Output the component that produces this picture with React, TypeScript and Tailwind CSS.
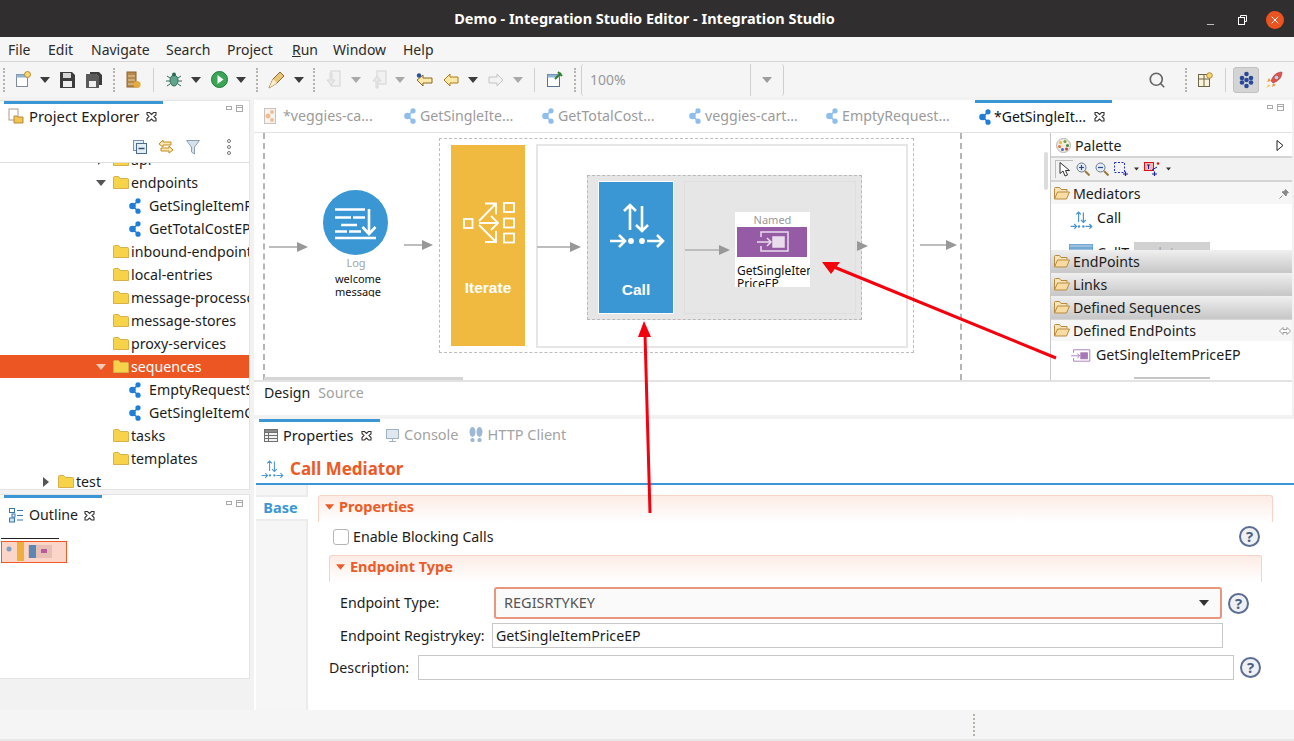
import React from 'react';
import { Search, Minus, X } from 'lucide-react';

const Caret = ({ className = '' }: { className?: string }) => (
  <svg width="10" height="6" viewBox="0 0 10 6" className={`shrink-0 ${className}`}>
    <path d="M0 0h10L5 6z" fill="currentColor" />
  </svg>
);

const NodeIcon = ({ className = '' }: { className?: string }) => (
  <svg width="12" height="16" viewBox="0 0 12 16" className={`shrink-0 ${className}`}>
    <path d="M9 3L3.5 8L9 13" fill="none" stroke="#1f7fd8" strokeWidth="1.6" />
    <circle cx="3.5" cy="8" r="3.3" fill="#1f7fd8" />
    <circle cx="9" cy="2.8" r="2.6" fill="#1f7fd8" />
    <circle cx="9" cy="13.2" r="2.6" fill="#1f7fd8" />
  </svg>
);

const Folder = () => (
  <svg width="16" height="13" viewBox="0 0 16 13" className="shrink-0">
    <path d="M.5 12.500V1.500q0-1 1-1h4l2 2h7q1 0 1 1v9z" fill="#f6d348" stroke="#d8b04a" />
  </svg>
);

const OpenFolder = () => (
  <svg width="16" height="13" viewBox="0 0 16 13" className="shrink-0">
    <path d="M.5 12V1.500q0-1 1-1h4l1.500 2h6v2" fill="#f8e4b8" stroke="#b98a3c" />
    <path d="M.5 12L3.500 5h12l-3 7z" fill="#f8dca4" stroke="#b98a3c" />
  </svg>
);

const CallGlyph = ({ className = '', stroke = '#fff', width = 60, height = 48, sw = 2.6 }: { className?: string; stroke?: string; width?: number; height?: number; sw?: number }) => (
  <svg width={width} height={height} viewBox="0 0 60 48" fill="none" stroke={stroke} strokeWidth={sw} className={`shrink-0 ${className}`}>
    <path d="M24 29V4M18 10l6-6 6 6M36 5v25M30 24l6 6 6-6M4 40h15M13 34l6 6-6 6M41 40h16M51 34l6 6-6 6" />
    <circle cx="25" cy="40" r="1.6" fill={stroke} />
    <circle cx="36" cy="40" r="1.6" fill={stroke} />
  </svg>
);

const EndpointGlyph = ({ className = '', stroke = '#e9dcec', width = 35, height = 23 }: { className?: string; stroke?: string; width?: number; height?: number }) => (
  <svg width={width} height={height} viewBox="0 0 35 23" fill="none" stroke={stroke} strokeWidth="1.5" className={`shrink-0 ${className}`}>
    <path d="M6 7V2h27v19H6v-5" />
    <rect x="18" y="7" width="11" height="10" fill={stroke} />
    <path d="M2 12h14M12 8l4 4-4 4" />
  </svg>
);

const CloseTab = () => (
  <svg width="11" height="11" viewBox="0 0 11 11" fill="none" stroke="#333" strokeWidth="1.1" className="shrink-0">
    <path d="M1 1.500h2.500L5.500 3.500 7.500 1.500H10v2.500L8 5.500l2 2V10H7.500L5.500 8l-2 2H1V7.500l2-2-2-2z" />
  </svg>
);

const MinMax = ({ className = '' }: { className?: string }) => (
  <div className={`flex items-center gap-[4px] ${className}`}>
    <div className="w-[6px] h-[4px] border border-[#a9a9a9] bg-white" />
    <div className="w-[7px] h-[7px] border border-[#a9a9a9] bg-white flex flex-col"><div className="h-[2px] border-b border-[#a9a9a9]" /></div>
  </div>
);

const Dotted = ({ className = '' }: { className?: string }) => (
  <div className={`w-0 h-[24px] border-l-2 border-dotted border-[#b5b1ab] ${className}`} />
);

const Help = () => (
  <div className="w-[21px] h-[21px] shrink-0 rounded-full border-2 border-[#5b6d92] bg-[#eff0f3] text-[#4d5f85] text-[15px] leading-[17px] font-bold text-center">?</div>
);

const SectionHead = ({ label, className = '' }: { label: string; className?: string }) => (
  <div className={`h-[27px] rounded-t-[3px] border border-b-0 border-[#f7d3c6] bg-linear-to-b from-[#fcece5] to-white flex items-center pl-[6px] pb-[5px] gap-[5px] text-[#ee5a26] font-bold text-[14.500px] ${className}`}>
    <Caret className="w-[9px] text-[#ee5a26]" />
    {label}
  </div>
);

function TitleBar() {
  return (
    <div className="h-[37px] shrink-0 bg-[#302e2e] relative flex items-center justify-center text-white font-bold text-[14.500px] pr-[5px]">
      Demo - Integration Studio Editor - Integration Studio
      <div className="absolute right-[10px] top-[10px] flex items-center text-white">
        <Minus size={11} strokeWidth={1.5} className="mr-[21px] mt-[9px]" />
        <svg width="10" height="10" viewBox="0 0 10 10" fill="none" stroke="#fff" className="mr-[19px]"><path d="M3.500 2V.5h6v6H8" /><rect x="1.500" y="2.500" width="6" height="7" /></svg>
        <div className="w-[18px] h-[18px] rounded-full bg-[#e95420] flex items-center justify-center"><X size={12} strokeWidth={2} /></div>
      </div>
    </div>
  );
}

function MenuBar() {
  const items: [string, string][] = [['File', 'w-[40px]'], ['Edit', 'w-[43px]'], ['Navigate', 'w-[75px]'], ['Search', 'w-[61px]'], ['Project', 'w-[65px]']];
  return (
    <div className="h-[25px] shrink-0 bg-[#f6f6f6] border-b border-[#d6d6d6] flex items-center pl-[8px] text-[14px] text-[#2b2b2b]">
      {items.map(([t, w]) => <div key={t} className={w}>{t}</div>)}
      <div className="w-[41px]"><span className="underline">R</span>un</div>
      <div className="w-[70px]">Window</div>
      <div>Help</div>
    </div>
  );
}

function ToolBar() {
  return (
    <div className="h-[35px] shrink-0 bg-[#f5f5f5] flex items-center pl-[3px] text-[#3d3d3d]">
      <Dotted className="mr-[10px]" />
      {/* new */}
      <svg width="16" height="17" viewBox="0 0 16 17" className="mr-[9px]"><rect x="1.500" y="3.500" width="11" height="12" fill="#fff" stroke="#7d8a99" /><rect x="1.500" y="3.500" width="11" height="3" fill="#8fb4d8" /><circle cx="12.500" cy="3.500" r="3" fill="#f5d76e" stroke="#b98a3c" /></svg>
      <Caret className="mr-[10px]" />
      {/* save */}
      <svg width="15" height="16" viewBox="0 0 15 16" className="mr-[11px]"><path d="M0 0h12l3 3v13H0z" fill="#3c3c3c" /><rect x="3" y="1" width="8" height="5" fill="#d5d5d5" /><rect x="3" y="9" width="9" height="6" fill="#efefef" /></svg>
      <svg width="16" height="16" viewBox="0 0 16 16" className="mr-[11px]"><path d="M0 2h10l3 3v11H0z" fill="#5a5a5a" /><path d="M4 0h9l3 3v10h-3V5l-3-3H4z" fill="#3c3c3c" /><rect x="3" y="9" width="7" height="6" fill="#efefef" /></svg>
      <Dotted className="mr-[11px]" />
      <svg width="15" height="18" viewBox="0 0 15 18" className="mr-[12px]"><rect x="1" y="1" width="9" height="15" fill="#b88a4a" stroke="#8a6530" /><path d="M2 5h7M2 9h7M2 13h7" stroke="#e4cfa6" /><circle cx="11" cy="13.500" r="3.500" fill="#e3a93c" /></svg>
      <div className="w-px h-[24px] bg-[#d0d0d0] mr-[12px]" />
      {/* debug */}
      <svg width="16" height="17" viewBox="0 0 16 17" className="mr-[9px]"><ellipse cx="8" cy="9.500" rx="4" ry="5.500" fill="#5fa58a" stroke="#2e6b57" /><circle cx="8" cy="3.500" r="2" fill="#2e6b57" /><path d="M1 5l3 2M15 5l-3 2M0 10h4M16 10h-4M1 15l3-2M15 15l-3-2" stroke="#2e6b57" /></svg>
      <Caret className="mr-[10px]" />
      <svg width="17" height="17" viewBox="0 0 17 17" className="mr-[8px]"><circle cx="8.500" cy="8.500" r="8" fill="#3aa655" stroke="#1d7a3a" /><path d="M6.500 4l6 4.500-6 4.500z" fill="#fff" /></svg>
      <Caret className="mr-[10px]" />
      <Dotted className="mr-[10px]" />
      <svg width="17" height="18" viewBox="0 0 17 18" className="mr-[9px]"><path d="M1 17l4-9 7-7 4 4-7 7z" fill="#e8c77a" stroke="#8a6a2e" /><path d="M1 17l4-9 4 4z" fill="#fbeec8" /></svg>
      <Caret className="mr-[9px]" />
      <Dotted className="mr-[11px]" />
      <svg width="15" height="19" viewBox="0 0 15 19" className="mr-[10px] opacity-50"><rect x="5" y="1" width="9" height="15" fill="#eee" stroke="#b5b5b5" /><path d="M4 3v7H1l4 5 4-5H6V3z" fill="#ddd" stroke="#bbb" /></svg>
      <Caret className="mr-[11px] text-[#a9a9a9]" />
      <svg width="15" height="19" viewBox="0 0 15 19" className="mr-[8px] opacity-50"><rect x="5" y="1" width="9" height="13" fill="#eee" stroke="#b5b5b5" /><path d="M4 18v-7H1l4-5 4 5H6v7z" fill="#ddd" stroke="#bbb" /></svg>
      <Caret className="mr-[11px] text-[#a9a9a9]" />
      <svg width="17" height="14" viewBox="0 0 17 14" className="mr-[10px]"><path d="M1 7l6-5v3h9v5H7v3z" fill="#fce8a8" stroke="#8a6a1e" /><circle cx="3" cy="2.500" r="2.200" fill="#2e4f9b" /></svg>
      <svg width="16" height="14" viewBox="0 0 16 14" className="mr-[9px]"><path d="M1 7l6-6v3h8v6H7v3z" fill="#fce8a8" stroke="#b07d18" /></svg>
      <Caret className="mr-[10px]" />
      <svg width="16" height="14" viewBox="0 0 16 14" className="mr-[9px]"><path d="M15 7L9 1v3H1v6h8v3z" fill="#f2f2f2" stroke="#c4c4c4" /></svg>
      <Caret className="mr-[11px] text-[#a9a9a9]" />
      <div className="w-px h-[24px] bg-[#d0d0d0] mr-[11px]" />
      <svg width="17" height="17" viewBox="0 0 17 17" className="mr-[11px]"><rect x="1.500" y="3.500" width="12" height="12" fill="#fff" stroke="#59738c" /><rect x="1.500" y="3.500" width="12" height="3" fill="#8fb4d8" /><path d="M9 8l6-6M12 1l4 4" stroke="#2f7d32" strokeWidth="2" /></svg>
      <Dotted className="mr-[5px]" />
      <div className="w-[170px] h-[32px] rounded-l-[3px] border-x border-[#cfcfcf] flex items-center pl-[8px] text-[14px] text-[#9a9a9a]">100%</div>
      <div className="w-[33px] h-[32px] rounded-r-[3px] border-r border-[#cfcfcf] flex items-center justify-center text-[#9d9d9d]"><Caret /></div>
      <Search size={18} strokeWidth={2.2} className="ml-[364px] text-[#666]" />
      <Dotted className="ml-[19px]" />
      <svg width="15" height="15" viewBox="0 0 15 15" className="ml-[11px]"><rect x=".5" y="2.500" width="11" height="12" fill="#fbf3d9" stroke="#6c6448" /><path d="M.5 7h11M6 2.500v12" stroke="#6c6448" /><circle cx="11.500" cy="3.500" r="2.800" fill="#f5d76e" stroke="#b98a3c" /></svg>
      <div className="w-px h-[24px] bg-[#d0d0d0] ml-[12px]" />
      <div className="ml-[7px] w-[26px] h-[26px] rounded-[3px] bg-[#d4d4d4] border border-[#c2c2c2] flex items-center justify-center">
        <svg width="15" height="18" viewBox="0 0 15 18" fill="#28489a"><circle cx="7.500" cy="3" r="2.300" /><circle cx="3" cy="7" r="2.300" /><circle cx="12" cy="7" r="2.300" /><circle cx="7.500" cy="9" r="2.300" /><circle cx="3" cy="11.500" r="2.300" /><circle cx="12" cy="11.500" r="2.300" /><circle cx="7.500" cy="15" r="2.300" /></svg>
      </div>
      <svg width="18" height="18" viewBox="0 0 18 18" className="ml-[6px]"><path d="M17 1c-5 0-9 3-11 9l2 2c6-2 9-6 9-11z" fill="#d9534f" stroke="#a33" strokeWidth=".5" /><circle cx="11.500" cy="6.500" r="1.800" fill="#a8def0" /><path d="M6 10l-4 1 2-4zM8 12l-1 4 4-2z" fill="#ef9a3c" /><path d="M4 13l-3 4 4-2z" fill="#f6c44f" /></svg>
    </div>
  );
}

function TreeRow({ label, indent, selected, caret, node }: { label: string; indent: string; selected?: boolean; caret?: 'down' | 'right'; node?: boolean }) {
  return (
    <div className={`h-[23px] flex items-center whitespace-nowrap ${indent} ${selected ? 'bg-[#ec5623] text-white' : 'text-[#1c1c1c]'}`}>
      {!node && (
        <div className="w-[17px] shrink-0 flex">
          {caret === 'down' && <Caret className={selected ? 'text-[#fbc9b6]' : 'text-[#555]'} />}
          {caret === 'right' && <Caret className="-rotate-90 text-[#555]" />}
        </div>
      )}
      {node ? <NodeIcon className="mr-[8px]" /> : <div className="mr-[2px]"><Folder /></div>}
      <span>{label}</span>
    </div>
  );
}

function ProjectExplorer() {
  return (
    <div className="h-[390px] bg-white border border-[#e3e3e3] border-l-0 flex flex-col text-[14.200px]">
      <div className="h-[33px] shrink-0 flex relative">
        <div className="ml-[4px] w-[159px] h-[33px] border-t-[3px] border-[#3b96d6] flex items-center pl-[4px] pb-[6px] gap-[5px] text-[#1c1c1c] text-[14.800px]">
          <svg width="16" height="16" viewBox="0 0 16 16"><rect x="1" y="1" width="9" height="11" fill="#fff" stroke="#b09a8a" /><path d="M6 8h3l1 1h5v6H6z" fill="#f2c552" stroke="#b98a3c" /></svg>
          Project Explorer
          <span className="ml-[2px]"><CloseTab /></span>
        </div>
        <MinMax className="ml-auto mr-[6px] h-[10px] mt-[2px]" />
      </div>
      <div className="h-[29px] shrink-0 border-b border-[#e0e0e0] flex items-center pl-[133px] pb-[2px]">
        <svg width="14" height="14" viewBox="0 0 14 14" className="mr-[11px]"><rect x=".5" y=".5" width="10" height="10" fill="#e4ecf4" stroke="#7d93ab" /><rect x="3.500" y="3.500" width="10" height="10" fill="#e4ecf4" stroke="#4a6c91" /><path d="M5.500 8.500h6" stroke="#2d4f73" strokeWidth="1.500" /></svg>
        <svg width="16" height="16" viewBox="0 0 16 16" className="mr-[12px]"><path d="M1 5l4-4v2h8v3H5v2zM15 11l-4-4v2H3v3h8v2z" fill="#fbe8b0" stroke="#c48a1e" /></svg>
        <svg width="14" height="15" viewBox="0 0 14 15" className="mr-[27px]"><path d="M.5.5h13L8.500 7v7l-3-2V7z" fill="#d5e2ec" stroke="#8aa0b3" /></svg>
        <div className="flex flex-col gap-[2px]">
          <div className="w-[4px] h-[4px] rounded-full border border-[#777]" />
          <div className="w-[4px] h-[4px] rounded-full border border-[#777]" />
          <div className="w-[4px] h-[4px] rounded-full border border-[#777]" />
        </div>
      </div>
      <div className="flex-1 overflow-hidden">
        <div className="-mt-[15px]">
          <TreeRow label="api" indent="pl-[96px]" caret="right" />
          <TreeRow label="endpoints" indent="pl-[96px]" caret="down" />
          <TreeRow label="GetSingleItemPriceEP" indent="pl-[129px]" node />
          <TreeRow label="GetTotalCostEP" indent="pl-[129px]" node />
          <TreeRow label="inbound-endpoints" indent="pl-[96px]" />
          <TreeRow label="local-entries" indent="pl-[96px]" />
          <TreeRow label="message-processors" indent="pl-[96px]" />
          <TreeRow label="message-stores" indent="pl-[96px]" />
          <TreeRow label="proxy-services" indent="pl-[96px]" />
          <TreeRow label="sequences" indent="pl-[96px]" selected caret="down" />
          <TreeRow label="EmptyRequestSeq" indent="pl-[129px]" node />
          <TreeRow label="GetSingleItemCostSeq" indent="pl-[129px]" node />
          <TreeRow label="tasks" indent="pl-[96px]" />
          <TreeRow label="templates" indent="pl-[96px]" />
          <TreeRow label="test" indent="pl-[41px]" caret="right" />
        </div>
      </div>
    </div>
  );
}

function Outline() {
  return (
    <div className="mt-[4px] h-[185px] bg-white border border-[#e3e3e3] border-l-0 flex flex-col text-[14.200px]">
      <div className="h-[35px] shrink-0 flex">
        <div className="ml-[4px] w-[98px] border-t-[3px] border-[#3b96d6] flex items-center pl-[5px] pt-[2px] gap-[6px] text-[#1c1c1c]">
          <svg width="14" height="15" viewBox="0 0 14 15" fill="none" stroke="#3577b5"><rect x=".5" y=".5" width="5" height="4" /><rect x=".5" y="10" width="5" height="4" fill="#cfe2f3" /><path d="M8 2.500h6M8 7.500h6M8 12h6" /><rect x="3" y="6" width="3" height="3" /></svg>
          Outline
          <CloseTab />
        </div>
        <MinMax className="ml-auto mr-[6px] h-[10px] mt-[3px]" />
      </div>
      <div className="flex-1 pl-[1px] pt-[8px]">
        <div className="w-[58px] h-px bg-[#222]" />
        <svg width="66" height="22" viewBox="0 0 66 22" className="mt-[2px]">
          <rect x=".5" y=".5" width="65" height="21" fill="#fbd5c8" stroke="#ee5a26" />
          <circle cx="8" cy="8" r="2.500" fill="#7f9fc4" />
          <rect x="16" y="1" width="7" height="19" fill="#f0ae3c" />
          <rect x="27" y="4" width="24" height="13" fill="#e8bfb4" />
          <rect x="28" y="4" width="7" height="13" fill="#5b87b5" />
          <rect x="40" y="8" width="6" height="4" fill="#b85a9b" />
        </svg>
      </div>
    </div>
  );
}

const Arrow = ({ className, line = 'flex-1' }: { className: string; line?: string }) => (
  <div className={`absolute flex items-center ${className}`}>
    <div className={`h-[2px] bg-[#bdbdbd] ${line}`} />
    <svg width="11" height="10" viewBox="0 0 11 10" className="shrink-0"><path d="M0 0l11 5-11 5z" fill="#989898" /></svg>
  </div>
);

function Canvas() {
  return (
    <div className="relative w-[796px] h-[247px] overflow-hidden bg-white">
      <div className="absolute left-[9px] top-0 bottom-0 border-l-2 border-dashed border-[#b5b5b5]" />
      <div className="absolute left-[706px] top-0 bottom-0 border-l-2 border-dashed border-[#b5b5b5]" />
      <Arrow className="left-[15px] top-[109px] w-[39px]" />
      <div className="absolute left-[69px] top-[57px] w-[65px] h-[65px] rounded-full bg-[#3b96d4]">
        <svg width="65" height="65" viewBox="0 0 65 65" fill="none" stroke="#fff" strokeWidth="2.600">
          <path d="M12 19.500h30M12 27.500h16M30 27.500h12M18 35h16M12 41.500h12M26 41.500h12M12 48h41M46 19v25M39.500 37l6.500 7 6.500-7" />
        </svg>
      </div>
      <div className="absolute left-[72px] top-[122px] w-[60px] text-center text-[11px] leading-[15px] text-[#a3a3a3]">Log</div>
      <div className="absolute left-[64px] top-[139px] w-[80px] h-[25px] overflow-hidden text-center text-[11px] leading-[13px] text-[#111]">welcome<br />message</div>
      <Arrow className="left-[150px] top-[107px] w-[29px]" />

      <div className="absolute left-[185px] top-[5px] w-[475px] h-[215px] border border-dashed border-[#bdbdbd]" />
      <div className="absolute left-[197px] top-[12px] w-[74px] h-[201px] bg-[#efba3f] flex flex-col items-center">
        <svg width="55" height="46" viewBox="0 0 55 46" fill="none" stroke="#fff" strokeWidth="1.800" className="mt-[55px] ml-[2px]">
          <rect x="2" y="19" width="8.500" height="9" /><rect x="42" y="3" width="10" height="9" /><rect x="42" y="18.500" width="10" height="9" /><rect x="42" y="33.500" width="10" height="9" />
          <path d="M17 21L34 3.500M23 3.500h11v11M17 23h19M29 16l7 7-7 7M17 25l17 17M34 31v11H23" />
        </svg>
        <div className="mt-[30px] text-white text-[15.500px] font-bold font-['Liberation_Sans',sans-serif]">Iterate</div>
      </div>
      <div className="absolute left-[282px] top-[11px] w-[372px] h-[204px] border-2 border-[#e6e6e6]" />
      <Arrow className="left-[283px] top-[109px] w-[44px]" />
      <div className="absolute left-[333px] top-[42px] w-[275px] h-[145px] bg-[#e6e6e6] border border-dashed border-[#b9b9b9]" />
      <div className="absolute left-[344px] top-[48px] w-[76px] h-[133px] bg-[#3b96d4] border border-white flex flex-col items-center">
        <CallGlyph className="mt-[19px]" />
        <div className="mt-[29px] text-white text-[15.500px] font-bold font-['Liberation_Sans',sans-serif]">Call</div>
      </div>
      <div className="absolute left-[430px] top-[48px] w-[172px] h-[133px] border border-[#dfdfdf]" />
      <Arrow className="left-[431px] top-[112px] w-[45px]" />
      <div className="absolute left-[481px] top-[79px] w-[75px] h-[75px] bg-white overflow-hidden flex flex-col items-center">
        <div className="h-[15px] text-[11px] leading-[16px] text-[#9a9a9a]">Named</div>
        <div className="self-start ml-[2px] w-[70px] h-[33px] bg-[#955ca5] flex items-center justify-center"><EndpointGlyph /></div>
        <div className="w-[73px] ml-[2px] text-[12px] leading-[13px] mt-[7px] text-[#111] whitespace-nowrap overflow-hidden">GetSingleItem<br />PriceEP</div>
      </div>
      <Arrow className="left-[603px] top-[108px] w-[10px]" line="hidden" />
      <Arrow className="left-[666px] top-[107px] w-[37px]" />
      <div className="absolute left-[10px] bottom-0 w-[199px] h-[3px] bg-[#d6d6d6]" />
      <div className="absolute right-[2px] top-[19px] w-[4px] h-[38px] rounded-[2px] bg-[#dcdcdc]" />
    </div>
  );
}

const PaletteDrawer = ({ label }: { label: string }) => (
  <div className="h-[23px] shrink-0 flex items-center pl-[3px] pt-[1px] gap-[3px] border-b border-[#c9c9c9] bg-linear-to-b from-[#f0f0f0] to-[#c8c8c8] text-[#1c1c1c]">
    <OpenFolder />
    {label}
  </div>
);

function Palette() {
  return (
    <div className="flex-1 h-[247px] border-l border-[#c8c8c8] flex flex-col text-[14.200px] text-[#1c1c1c] overflow-hidden">
      <div className="h-[25px] shrink-0 border-b-2 border-[#d4d4d4] flex items-center pl-[5px] pt-[2px] gap-[4px]">
        <svg width="15" height="15" viewBox="0 0 15 15"><circle cx="7.500" cy="7.500" r="7" fill="#f2ecdf" stroke="#b5b5b5" /><circle cx="4.500" cy="4.500" r="1.500" fill="#e6b93c" /><circle cx="9" cy="3.500" r="1.500" fill="#6ea83c" /><circle cx="11.500" cy="7.500" r="1.500" fill="#3c8a3c" /><circle cx="3.500" cy="8.500" r="1.500" fill="#e8703c" /><circle cx="6.500" cy="11.500" r="1.500" fill="#3c6fd0" /><circle cx="10.500" cy="11" r="1.500" fill="#d03c3c" /></svg>
        Palette
        <svg width="8" height="11" viewBox="0 0 8 11" className="ml-auto mr-[8px]"><path d="M1 .5l6 5-6 5z" fill="#fff" stroke="#222" /></svg>
      </div>
      <div className="h-[24px] shrink-0 border-b-2 border-[#d4d4d4] bg-[#f2f2f2] flex items-center pl-[4px]">
        <div className="w-[18px] h-[18px] border-l border-t border-[#bdbdbd] flex items-center justify-center mr-[3px]">
          <svg width="11" height="15" viewBox="0 0 11 15"><path d="M1 .5v11l3-2.500 2 5 2.500-1-2-4.500h4z" fill="#fff" stroke="#333" /></svg>
        </div>
        <svg width="14" height="14" viewBox="0 0 14 14" fill="none" className="mr-[5px]"><circle cx="5.500" cy="5.500" r="4.500" fill="#e4ecf4" stroke="#6b7a8a" /><path d="M9 9l4.500 4.500" stroke="#9a7a3c" strokeWidth="2" /><path d="M3 5.500h5M5.500 3v5" stroke="#28489a" strokeWidth="1.200" /></svg>
        <svg width="14" height="14" viewBox="0 0 14 14" fill="none" className="mr-[5px]"><circle cx="5.500" cy="5.500" r="4.500" fill="#e4ecf4" stroke="#6b7a8a" /><path d="M9 9l4.500 4.500" stroke="#9a7a3c" strokeWidth="2" /><path d="M3 5.500h5" stroke="#28489a" strokeWidth="1.200" /></svg>
        <svg width="15" height="14" viewBox="0 0 15 14" fill="none" className="mr-[5px]"><rect x=".5" y=".5" width="10" height="10" stroke="#2030d0" strokeDasharray="2 1.500" /><path d="M9 12h5M11.500 9.500v4.500" stroke="#20209a" strokeWidth="1.200" /></svg>
        <Caret className="w-[5px] mr-[5px] text-[#333]" />
        <svg width="16" height="14" viewBox="0 0 16 14" fill="none" className="mr-[6px]"><rect x=".5" y=".5" width="9" height="8" fill="#f7b5b5" stroke="#e01010" /><path d="M3 3h3M4.500 3v4M8 8l5-3" stroke="#20209a" /><circle cx="14" cy="1.500" r="1.300" fill="#e01010" /><path d="M8 12h5M10.500 9.500v4.500" stroke="#20209a" strokeWidth="1.200" /></svg>
        <Caret className="w-[5px] text-[#333]" />
      </div>
      <div className="h-[22px] shrink-0 bg-[#f6f6f6] flex items-center pl-[3px] pt-[1px] gap-[3px]">
        <OpenFolder />
        Mediators
        <svg width="10" height="10" viewBox="0 0 10 10" className="ml-auto mr-[3px]"><path d="M.5 9.500L3.500 6.500M3 3l4 4 1-3 1.500-.5-3-3L6 2z" fill="#8a8a8a" stroke="#8a8a8a" /></svg>
      </div>
      <div className="h-[46px] shrink-0 overflow-hidden relative">
        <div className="h-[38px] flex items-start pl-[18px] pt-[3px]">
          <CallGlyph width={24} height={20} stroke="#4a94d0" sw={3} className="mt-[3px] mr-[4px]" />
          Call
        </div>
        <div className="h-[25px] flex items-start pl-[18px]">
          <svg width="24" height="14" viewBox="0 0 24 14" className="mt-[2px] mr-[4px] shrink-0"><rect width="24" height="14" fill="#9dbfdd" stroke="#4a94d0" /><path d="M0 4h24" stroke="#4a94d0" /></svg>
          CallTemplate
        </div>
        <div className="absolute left-[83px] top-[38px] w-[76px] h-[8px] bg-[#c6c6c6] opacity-80" />
      </div>
      <PaletteDrawer label="EndPoints" />
      <PaletteDrawer label="Links" />
      <PaletteDrawer label="Defined Sequences" />
      <div className="h-[22px] shrink-0 bg-[#f6f6f6] flex items-center pl-[3px] gap-[3px] border-t border-[#d6d6d6]">
        <OpenFolder />
        Defined EndPoints
        <svg width="12" height="8" viewBox="0 0 12 8" fill="#fff" stroke="#9a9a9a" className="ml-auto mr-[1px]"><path d="M.5 4L4 .5v2h4v-2L11.500 4 8 7.500v-2H4v2z" /></svg>
      </div>
      <div className="h-[38px] flex items-start pl-[19px] pt-[3px] relative">
        <EndpointGlyph stroke="#a678b5" width={21} height={15} className="mt-[4px] mr-[5px]" />
        GetSingleItemPriceEP
        <div className="absolute left-[83px] bottom-0 w-[76px] h-[2px] bg-[#c6c6c6]" />
      </div>
    </div>
  );
}

const EditorTab = ({ label, w, faded }: { label: string; w: string; faded?: boolean }) => (
  <div className={`${w} h-[33px] flex items-center pl-[10px] pb-[1px] text-[#9b9b9b] text-[14.200px] whitespace-nowrap`}>
    {faded
      ? <svg width="14" height="16" viewBox="0 0 14 16" className="mr-[5px]"><rect x=".5" y=".5" width="11" height="15" fill="#f4f4f4" stroke="#c9c2ba" /><circle cx="4" cy="8" r="2.500" fill="#f2bd93" /><circle cx="8" cy="4" r="2" fill="#f2bd93" /><circle cx="8" cy="12" r="2" fill="#f2bd93" /></svg>
      : <NodeIcon className="mr-[4px] opacity-50" />}
    {label}
  </div>
);

function Editor() {
  return (
    <div className="h-[315px] bg-white flex flex-col shrink-0">
      <div className="h-[33px] shrink-0 flex border-b border-[#e3e3e3]">
        <EditorTab label="*veggies-ca..." w="w-[140px]" faded />
        <EditorTab label="GetSingleIte..." w="w-[138px]" />
        <EditorTab label="GetTotalCost..." w="w-[147px]" />
        <EditorTab label="veggies-cart..." w="w-[137px]" />
        <EditorTab label="EmptyRequest..." w="w-[159px]" />
        <div className="w-[137px] border-t-[3px] border-[#3b96d6] flex items-center pl-[4px] pb-[2px] gap-[3px] text-[14px] text-[#111] whitespace-nowrap">
          <NodeIcon />
          *GetSingleIt...
          <span className="ml-[5px]"><CloseTab /></span>
        </div>
        <MinMax className="ml-auto mr-[8px] h-[10px] mt-[2px]" />
      </div>
      <div className="flex h-[247px] shrink-0">
        <Canvas />
        <Palette />
      </div>
      <div className="flex-1 border-t-2 border-[#e3e3e3] flex items-center pl-[10px] gap-[8px] text-[14.200px] text-[#1c1c1c] pb-[12px]">
        Design <span className="text-[#a2a2a2]">Source</span>
      </div>
    </div>
  );
}

const FieldLabel = ({ children, className }: { children: React.ReactNode; className: string }) => (
  <div className={`shrink-0 text-[#1c1c1c] ${className}`}>{children}</div>
);

function Properties() {
  return (
    <div className="mt-[4px] h-[291px] bg-white flex flex-col shrink-0 text-[14.200px] -mr-[2px]">
      <div className="h-[30px] shrink-0 flex text-[#a3a3a3] text-[14.500px]">
        <div className="ml-[5px] w-[121px] border-t-[3px] border-[#3b96d6] flex items-center pl-[5px] gap-[5px] text-[#1c1c1c]">
          <svg width="14" height="13" viewBox="0 0 14 13" fill="none" stroke="#6f6f6f"><rect x=".5" y=".5" width="13" height="12" fill="#f2f2f2" /><rect x=".5" y=".5" width="13" height="3" fill="#8a8a8a" /><path d="M.5 6.500h13M.5 9.500h13M4.500 3.500v9" /></svg>
          Properties
          <span className="ml-[3px]"><CloseTab /></span>
        </div>
        <div className="flex items-center ml-[6px] pt-[2px] gap-[5px]">
          <svg width="13" height="13" viewBox="0 0 13 13" fill="none" stroke="#9fb3c4"><rect x=".5" y=".5" width="12" height="9" fill="#dfe8ef" /><path d="M3 12.500h7M6.500 9.500v3" /></svg>
          Console
        </div>
        <div className="flex items-center ml-[10px] pt-[2px] gap-[5px]">
          <svg width="14" height="16" viewBox="0 0 14 16" fill="#9fb9d4"><ellipse cx="3.500" cy="5" rx="3" ry="5" /><ellipse cx="10.500" cy="5" rx="3" ry="5" /><rect x="1.500" y="11" width="4" height="4" rx="1.500" /><rect x="8.500" y="11" width="4" height="4" rx="1.500" /></svg>
          HTTP Client
        </div>
      </div>
      <div className="h-[36px] shrink-0 border-b-2 border-[#3b96d6] flex items-center pl-[4px] pt-[5px] gap-[6px] ml-[2px] text-[#ee5a26] font-bold text-[17px]">
        <CallGlyph width={24} height={20} stroke="#4a94d0" sw={2.600} />
        Call Mediator
      </div>
      <div className="flex-1 flex">
        <div className="w-[52px] ml-[2px] shrink-0 bg-[#f6f6f6] border-r-2 border-[#ececec] flex flex-col pt-[10px]">
          <div className="h-[26px] bg-white border-y-2 border-[#ececec] -mr-[2px] flex items-center justify-center pr-[3px] text-[#3b96d6] font-bold text-[14.500px]">Base</div>
        </div>
        <div className="flex-1 pl-[10px] pr-[21px] pt-[10px] flex flex-col">
          <SectionHead label="Properties" />
          <div className="h-[33px] flex items-center pl-[15px] pr-[13px] gap-[4px] -mt-[2px] mb-[2px]">
            <div className="w-[16px] h-[16px] rounded-[3px] border border-[#b5b5b5] bg-white" />
            <span className="text-[#1c1c1c]">Enable Blocking Calls</span>
            <div className="ml-auto"><Help /></div>
          </div>
          <SectionHead label="Endpoint Type" className="ml-[11px] mr-[11px]" />
          <div className="flex items-center h-[32px] mt-[5px] pl-[22px]">
            <FieldLabel className="w-[154px]">Endpoint Type:</FieldLabel>
            <div className="w-[728px] h-[32px] rounded-[3px] border-2 border-[#e9967f] bg-[#fafafa] flex items-center pl-[8px] pr-[11px] text-[#555] text-[14.500px]">
              REGISRTYKEY
              <Caret className="ml-auto text-[#333]" />
            </div>
            <div className="ml-[6px]"><Help /></div>
          </div>
          <div className="flex items-center h-[25px] mt-[4px] pl-[22px]">
            <FieldLabel className="w-[152px]">Endpoint Registrykey:</FieldLabel>
            <div className="w-[731px] h-[25px] border border-[#c8c8c8] flex items-center pl-[3px] text-[#1c1c1c]">GetSingleItemPriceEP</div>
          </div>
          <div className="flex items-center h-[25px] mt-[7px] pl-[11px]">
            <FieldLabel className="w-[89px]">Description:</FieldLabel>
            <div className="w-[816px] h-[25px] border border-[#c8c8c8]" />
            <div className="ml-[6px]"><Help /></div>
          </div>
        </div>
      </div>
    </div>
  );
}

function StatusBar() {
  return (
    <div className="h-[31px] shrink-0 bg-[#f5f5f5] border-b-2 border-[#e8e8e8] flex items-center pl-[973px]">
      <div className="h-[22px] border-l-2 border-dotted border-[#b5b1ab]" />
    </div>
  );
}

export default function App() {
  return (
    <div className="w-[1294px] h-[741px] relative overflow-hidden flex flex-col bg-[#f2f2f2] font-['Noto_Sans',sans-serif]">
      <TitleBar />
      <MenuBar />
      <ToolBar />
      <div className="h-[613px] shrink-0 flex pt-[3px]">
        <div className="w-[250px] shrink-0 flex flex-col">
          <ProjectExplorer />
          <Outline />
        </div>
        <div className="ml-[4px] mr-[2px] flex-1 flex flex-col min-w-0">
          <Editor />
          <Properties />
        </div>
      </div>
      <StatusBar />
      {/* red annotation arrows drawn on top of the screenshot */}
      <svg width="1294" height="741" viewBox="0 0 1294 741" className="absolute inset-0 pointer-events-none">
        <path d="M650 513L645 334M1056 358L834 267" fill="none" stroke="#f5000d" strokeWidth="3" />
        <path d="M644 321L638 337L651 337zM822 262L840 262L831 274z" fill="#f5000d" />
      </svg>
    </div>
  );
}
